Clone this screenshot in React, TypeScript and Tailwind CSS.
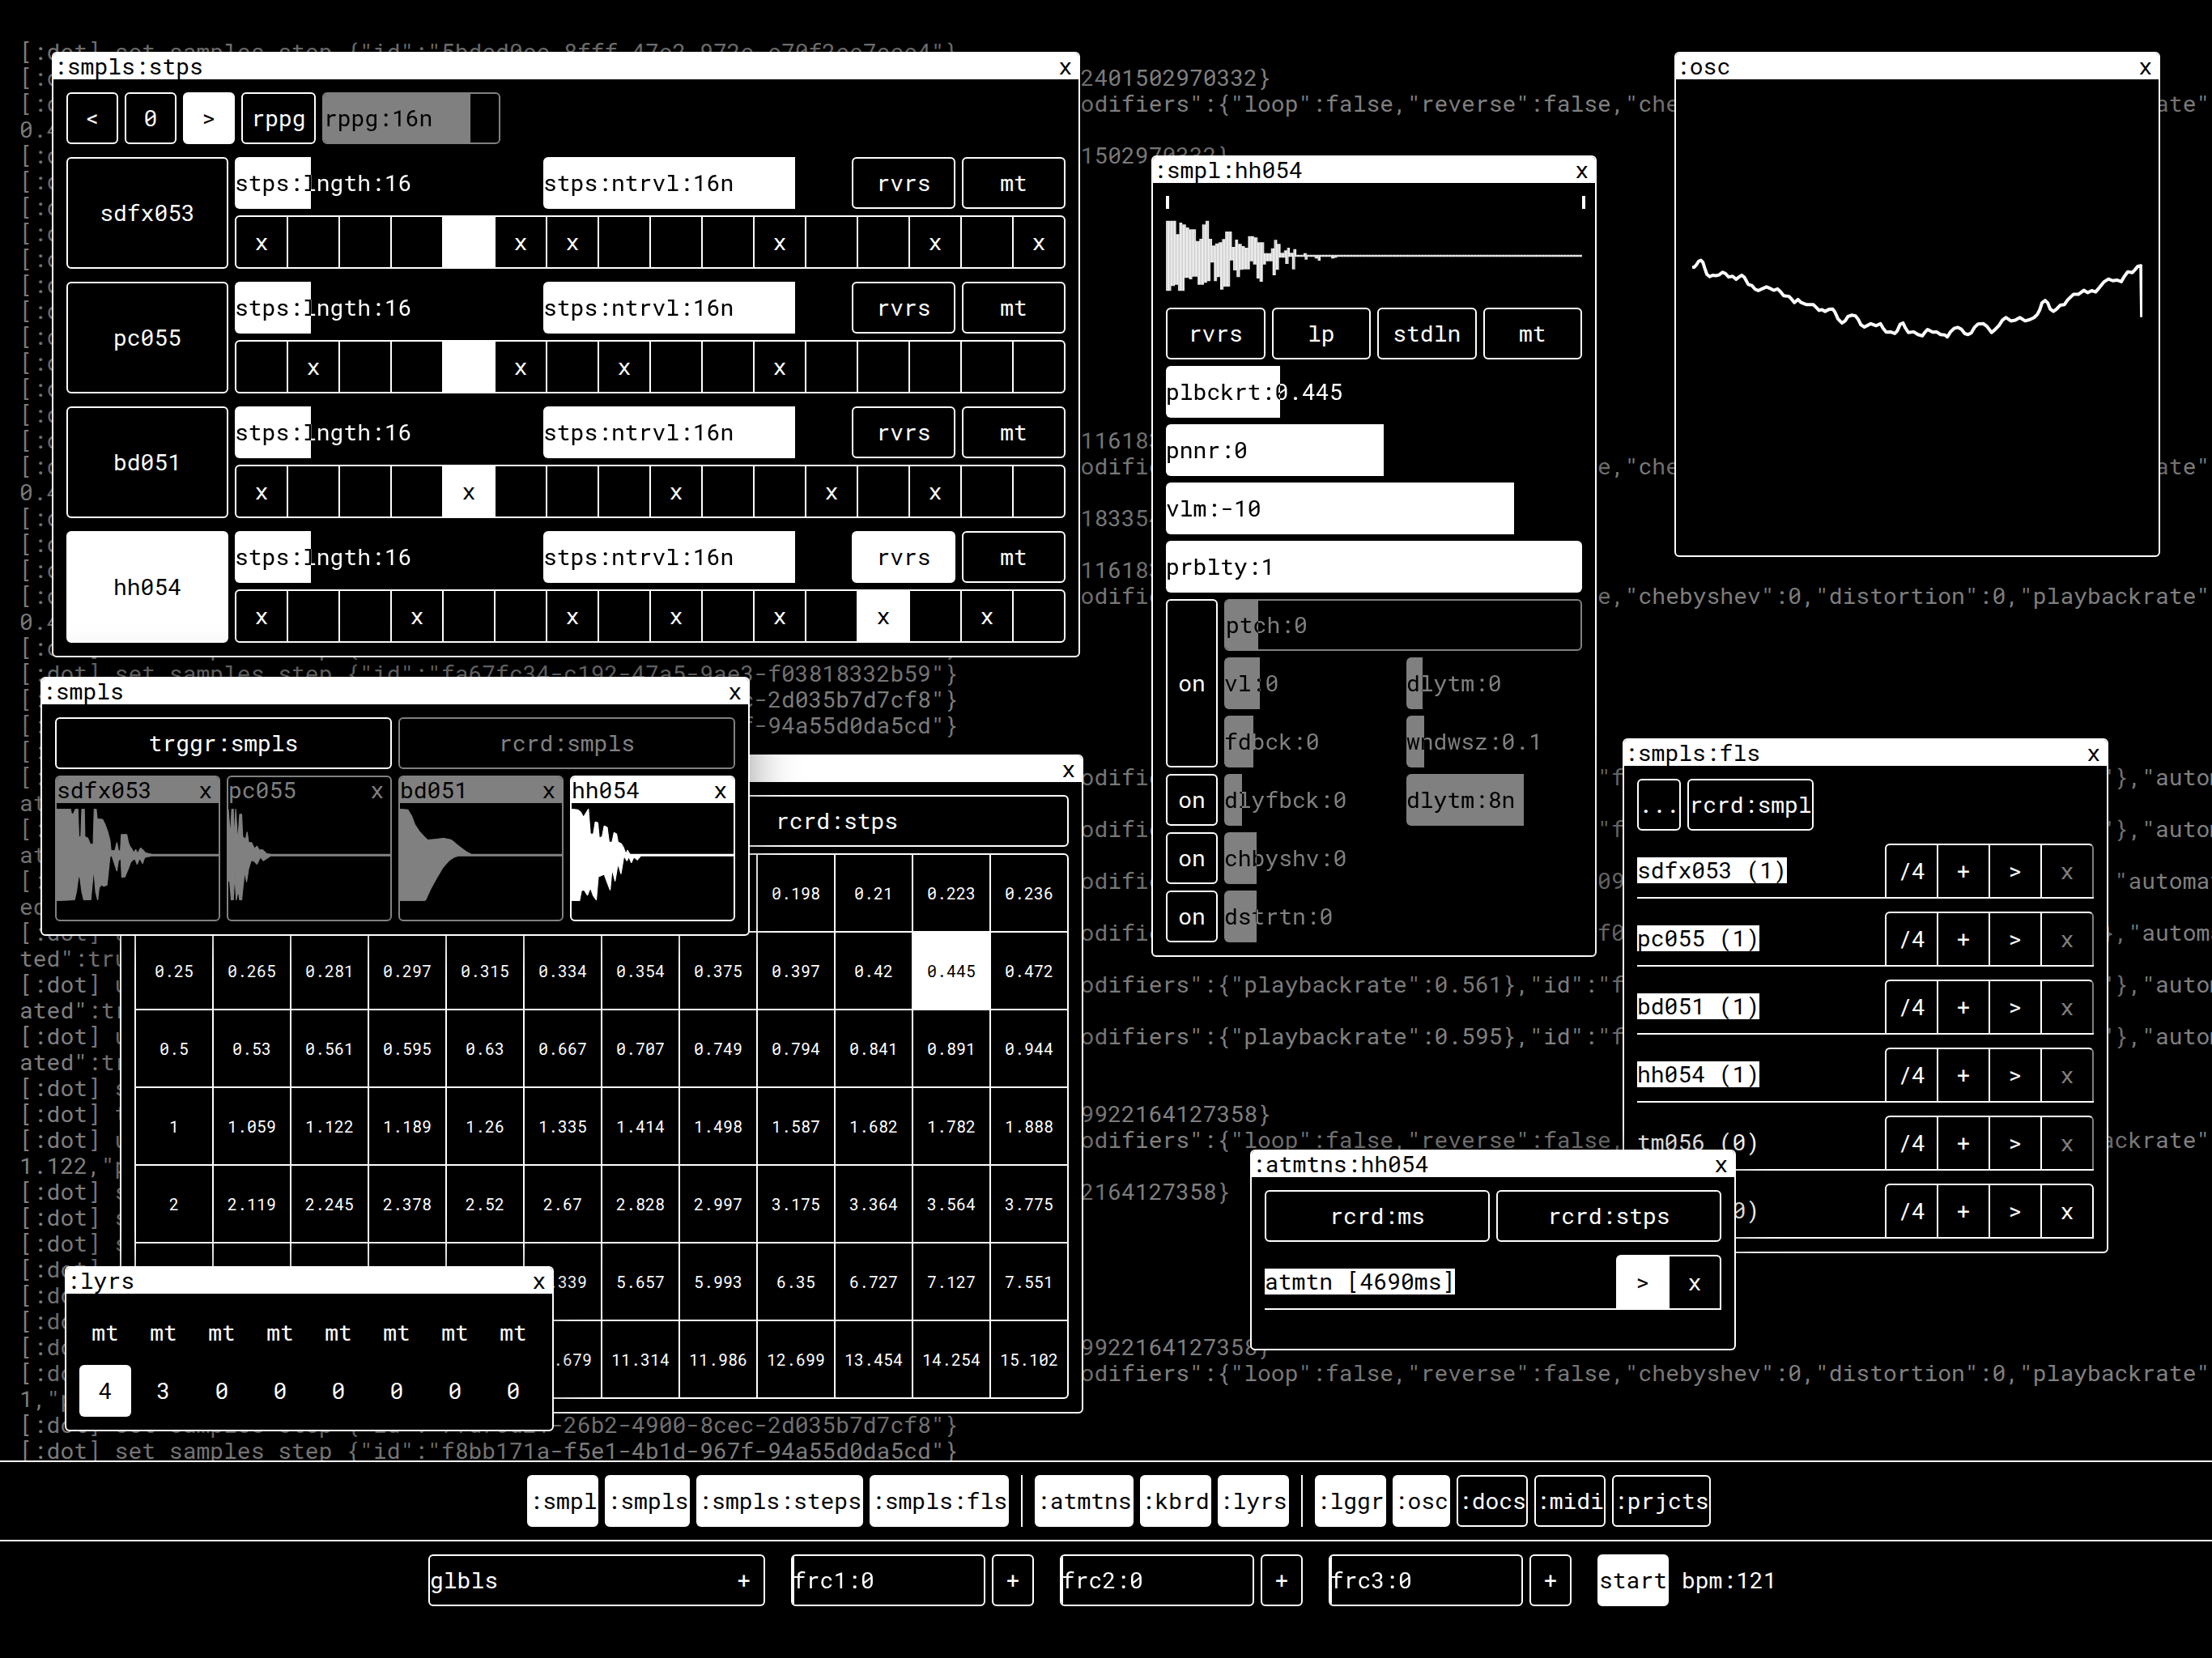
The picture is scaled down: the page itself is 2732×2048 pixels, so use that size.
import clsx from "clsx";
import type { ReactNode } from "react";

// ---------- log ----------

const FA = "fa67fc34-c192-47a5-9ae3-f03818332b59";
const CD = "7fd7cd21-26b2-4900-8cec-2d035b7d7cf8";
const F8 = "f8bb171a-f5e1-4b1d-967f-94a55d0da5cd";
const F0 = "f09a7c34-c192-47a5-9ae3-f03818332b59";

const set = (id: string) => `[:dot] set samples step {"id":"${id}"}`;
const trigger = (t: string) => `[:dot] trigger samples {"id":"${FA}","t":${t}}`;
const stop = (t: string) => `[:dot] stop samples {"id":"${FA}","t":${t}}`;
const state = (rate: string) =>
  `[:dot] update samples {"id":"${FA}","step":4,"modifiers":{"loop":false,"reverse":false,"chebyshev":0,"distortion":0,"playbackrate":${rate},"panner":0,"volume":-10}}`;
const rateChange = (rate: string) =>
  `[:dot] update samples {"id":"${FA}","step":4,"modifiers":{"playbackrate":${rate}},"id":"${F0}"},"automated":true}`;

const logLines = [
  set("5bded0ee-8fff-47e2-972e-e70f2ee7eee4"),
  trigger("0.47392401502970332"),
  state("0.445"),
  stop("0.47392401502970332"),
  set(FA),
  set(CD),
  set(F8),
  set(FA),
  set(CD),
  set(F8),
  set(FA),
  set(CD),
  set(F8),
  set(FA),
  trigger("0.473911618335418"),
  state("0.445"),
  stop("0.473911618335418"),
  set(CD),
  trigger("0.473911618335418"),
  state("0.445"),
  set(F8),
  set(FA),
  set(CD),
  set(F8),
  `[:dot] set automation {"on":true}`,
  rateChange("0.445"),
  rateChange("0.472"),
  rateChange("0.5"),
  rateChange("0.53"),
  rateChange("0.561"),
  rateChange("0.595"),
  set(CD),
  trigger("0.47399922164127358"),
  state("1.122"),
  stop("0.47399922164127358"),
  set(F8),
  set(FA),
  set(CD),
  set(F8),
  set(FA),
  trigger("0.47399922164127358"),
  state("1"),
  set(CD),
  set(F8),
];

// ---------- data ----------

const tracks = [
  { name: "sdfx053", steps: [0, 5, 6, 10, 13, 15], at: 4 },
  { name: "pc055", steps: [1, 5, 7, 10], at: 4 },
  { name: "bd051", steps: [0, 4, 8, 11, 13], at: 4 },
  { name: "hh054", steps: [0, 3, 6, 8, 10, 12, 14], at: 12, selected: true, reverse: true },
];

const samples = [
  {
    name: "sdfx053",
    head: "bg-[#808080] text-black",
    card: "border-[#808080] text-[#808080]",
    box: "112 576 328 384",
    d: "M112 598L140 598L142 615L146 615L150 598L155 598L157 700L161 700L163 598L168 598L169 700L175 705L180 728L186 728L188 598L192 598L194 633L205 636L210 655L215 680L220 715L222 750L230 752L234 722L237 750L241 755L243 692L254 692L257 720L260 735L264 745L268 760L272 748L276 762L282 742L286 748L292 760L305 765L440 765V772L305 772L290 778L286 800L280 780L275 803L270 780L262 795L258 815L250 850L244 852L242 780L237 790L234 828L229 800L224 772L220 775L214 880L208 885L202 880L198 890L195 935L191 905L187 820L181 935L167 935L163 905L159 850L156 850L152 905L148 935L112 938Z",
  },
  {
    name: "pc055",
    head: "text-[#808080]",
    card: "border-[#808080] text-[#808080]",
    box: "459 576 328 384",
    d: "M459 600L463 700L466 598L469 598L471 712L474 598L478 720L482 617L486 617L488 700L494 710L497 683L500 720L506 722L512 745L517 735L522 750L528 748L536 762L545 765L787 765V772L545 772L530 790L524 776L517 803L510 790L505 790L500 820L496 868L492 830L486 935L482 935L479 900L475 935L472 840L469 935L465 935L462 870L459 860Z",
  },
  {
    name: "bd051",
    head: "bg-[#808080] text-black",
    card: "border-[#808080] text-[#808080]",
    box: "806 576 328 384",
    d: "M806 598L822 600L830 625L836 655L845 680L855 700L862 712L875 710L895 706L910 712L925 735L940 755L950 765L1134 765V772L950 772L925 772L915 778L905 790L893 815L880 855L868 895L858 935L855 938L806 938Z",
  },
  {
    name: "hh054",
    head: "bg-white text-black",
    card: "border-white text-white",
    box: "1152 576 328 384",
    d: "M1152 598L1164 600L1170 608L1176 628L1182 610L1186 598L1190 690L1196 690L1200 645L1205 648L1208 705L1214 700L1218 660L1224 665L1228 720L1234 720L1238 685L1243 690L1246 720L1252 725L1257 740L1262 765L1265 750L1270 765L1480 765V772L1292 772L1285 787L1278 776L1273 797L1268 775L1264 790L1258 772L1252 838L1246 800L1240 865L1234 820L1230 898L1224 870L1218 840L1212 845L1206 850L1202 935L1196 920L1190 890L1184 918L1178 900L1172 900L1168 938L1152 938Z",
  },
];

const files = [
  { name: "sdfx053", count: 1, locked: true },
  { name: "pc055", count: 1, locked: true },
  { name: "bd051", count: 1, locked: true },
  { name: "hh054", count: 1, locked: true },
  { name: "tm056", count: 0, locked: true },
  { name: "cr057", count: 0, locked: false },
];

// 7 octaves of playback rates, 12 semitones each
const rates = Array.from({ length: 84 }, (_, i) => Number((0.125 * 2 ** (i / 12)).toFixed(3)));

const menu = [
  [
    [":smpl", true],
    [":smpls", true],
    [":smpls:steps", true],
    [":smpls:fls", true],
  ],
  [
    [":atmtns", true],
    [":kbrd", true],
    [":lyrs", true],
  ],
  [
    [":lggr", true],
    [":osc", true],
    [":docs", false],
    [":midi", false],
    [":prjcts", false],
  ],
] as [string, boolean][][];

// ---------- controls ----------

function Btn({ on, dim, className, children }: { on?: boolean; dim?: boolean; className?: string; children: ReactNode }) {
  return (
    <button
      type="button"
      className={clsx(
        "h-16 rounded-md border-2 text-center whitespace-nowrap",
        on ? "border-white bg-white text-black" : dim ? "border-[#808080] text-[#808080]" : "border-white text-white",
        className
      )}
    >
      {children}
    </button>
  );
}

function Slider({ label, value, dim, border, className }: { label: string; value: number; dim?: boolean; border?: boolean; className?: string }) {
  return (
    <label
      className={clsx(
        "isolate grid h-16 items-center overflow-hidden rounded-md bg-black",
        dim ? "text-[#808080]" : "text-white",
        border && (dim ? "border-2 border-[#808080]" : "border-2 border-white"),
        className
      )}
    >
      <input
        type="range"
        min={0}
        max={100}
        defaultValue={value}
        className="col-start-1 row-start-1 h-full w-full min-w-0 appearance-none [&::-webkit-slider-thumb]:opacity-0"
        style={{ background: `linear-gradient(to right, currentColor ${value}%, transparent ${value}%)` }}
      />
      <span className="pointer-events-none col-start-1 row-start-1 whitespace-nowrap mix-blend-difference">{label}</span>
    </label>
  );
}

function Win({ title, className, children }: { title: string; className: string; children: ReactNode }) {
  return (
    <section
      className={clsx(
        "absolute overflow-hidden rounded-md border-2 border-white bg-black shadow-[0_0_60px_rgba(0,0,0,0.4)]",
        className
      )}
    >
      <header className="flex h-8 items-center justify-between bg-white pr-2 text-black">
        <h2>{title}</h2>
        <button type="button">x</button>
      </header>
      {children}
    </section>
  );
}

function Row({ label, on, children }: { label: string; on?: boolean; children: ReactNode }) {
  return (
    <div className="flex items-center justify-between border-b-2 border-white">
      <span className={on ? "bg-white text-black" : ""}>{label}</span>
      <div className="flex">{children}</div>
    </div>
  );
}

const cell = "h-[66px] border-t-2 border-l-2 border-white";

// ---------- windows ----------

function Steps() {
  return (
    <Win title=":smpls:stps" className="top-16 left-16 w-[1270px]">
      <div className="flex flex-col gap-4 p-4">
        <div className="flex gap-2">
          <Btn className="w-16">&lt;</Btn>
          <Btn className="w-16">0</Btn>
          <Btn on className="w-16">
            &gt;
          </Btn>
          <Btn className="w-[92px]">rppg</Btn>
          <Slider label="rppg:16n" value={84} dim border className="w-[220px]" />
        </div>
        {tracks.map((t) => (
          <div key={t.name} className="flex gap-2">
            <Btn on={t.selected} className="h-auto w-[200px]">
              {t.name}
            </Btn>
            <div className="flex flex-1 flex-col gap-2">
              <div className="flex gap-2">
                <Slider label="stps:lngth:16" value={25.2} className="flex-1" />
                <Slider label="stps:ntrvl:16n" value={83.4} className="flex-1" />
                <Btn on={t.reverse} className="w-32">
                  rvrs
                </Btn>
                <Btn className="w-32">mt</Btn>
              </div>
              <div className="grid grid-cols-16 gap-0.5 overflow-hidden rounded-md border-2 border-white bg-white">
                {Array.from({ length: 16 }, (_, i) => (
                  <button
                    key={i}
                    type="button"
                    aria-label={`step ${i + 1}`}
                    className={clsx("h-[62px]", i === t.at ? "bg-white text-black" : "bg-black text-white")}
                  >
                    {t.steps.includes(i) ? "x" : ""}
                  </button>
                ))}
              </div>
            </div>
          </div>
        ))}
      </div>
    </Win>
  );
}

function Keyboard() {
  return (
    <Win title=":kbrd" className="top-[932px] left-[148px] w-[1190px]">
      <div className="flex flex-col gap-2 p-4">
        <div className="grid grid-cols-2 gap-2">
          <Btn>rcrd:ms</Btn>
          <Btn>rcrd:stps</Btn>
        </div>
        <div className="grid grid-cols-12 gap-0.5 overflow-hidden rounded-md border-2 border-white bg-white text-[20px]">
          {rates.map((r) => (
            <button key={r} type="button" className={clsx("h-[94px]", r === 0.445 ? "bg-white text-black" : "bg-black text-white")}>
              {r}
            </button>
          ))}
        </div>
      </div>
    </Win>
  );
}

function Samples() {
  return (
    <Win title=":smpls" className="top-[836px] left-[50px] w-[876px]">
      <div className="flex flex-col gap-2 p-4">
        <div className="grid grid-cols-2 gap-2">
          <Btn>trggr:smpls</Btn>
          <Btn dim>rcrd:smpls</Btn>
        </div>
        <div className="grid grid-cols-4 gap-2">
          {samples.map((s) => (
            <div key={s.name} className={clsx("overflow-hidden rounded-md border-2 pb-4", s.card)}>
              <div className={clsx("flex h-8 items-center justify-between pr-2", s.head)}>
                <span>{s.name}</span>
                <button type="button">x</button>
              </div>
              <svg viewBox={s.box} preserveAspectRatio="none" className="block h-32 w-full">
                <path d={s.d} fill="currentColor" stroke="currentColor" strokeWidth="2" strokeLinejoin="round" />
              </svg>
            </div>
          ))}
        </div>
      </div>
    </Win>
  );
}

function Sample() {
  return (
    <Win title=":smpl:hh054" className="top-48 left-[1422px] w-[550px]">
      <div className="flex flex-col gap-2 p-4">
        <div>
          {/* start / end markers */}
          <div className="-mr-1 flex justify-between">
            <div className="h-4 w-1 bg-white" />
            <div className="h-4 w-1 bg-white" />
          </div>
          <svg viewBox="105 234 1343 342" preserveAspectRatio="none" className="block h-[114px] w-full">
            <defs>
              <pattern id="bars" width="10" height="342" patternUnits="userSpaceOnUse">
                <rect width="10" height="342" fill="#cccccc" />
                <rect width="6" height="342" fill="#eeeeee" />
              </pattern>
            </defs>
            <path
              fill="url(#bars)"
              d="M105 278H138V328H148V285H158V292H170V303H180V310H202V353H213V345H222V292H233V278H244V345H254V370H264V362H275V358H286V346H296V318H318V375H328V348H338V364H350V372H360V378H370V335H390V340H401V358H422V398H444V380H454V349H464V364H475V397H486V388H496V378H505V397H516V383H526V404H549V398H560V404H1448V412H658V415H650V418H638V412H604V426H595V418H585V412H562V422H553V412H522V458H512V412H501V438H490V415H470V460H460V480H449V428H428V440H418V504H407V492H397V440H386V428H376V458H354V460H344V487H333V462H322V425H312V522H291V533H280V487H270V502H260V433H249V502H238V508H228V515H207V485H190V495H180V490H165V538H144V515H134V520H122V538H105Z"
            />
          </svg>
        </div>
        <div className="grid grid-cols-4 gap-2">
          <Btn>rvrs</Btn>
          <Btn>lp</Btn>
          <Btn>stdln</Btn>
          <Btn>mt</Btn>
        </div>
        <Slider label="plbckrt:0.445" value={27.4} />
        <Slider label="pnnr:0" value={52.4} />
        <Slider label="vlm:-10" value={83.6} />
        <Slider label="prblty:1" value={100} />
        <div className="flex gap-2">
          <Btn className="h-auto w-16">on</Btn>
          <div className="grid flex-1 grid-cols-2 gap-2">
            <Slider label="ptch:0" value={9.2} dim border className="col-span-2" />
            <Slider label="vl:0" value={20.3} dim />
            <Slider label="dlytm:0" value={9.2} dim />
            <Slider label="fdbck:0" value={16.6} dim />
            <Slider label="wndwsz:0.1" value={10.1} dim />
          </div>
        </div>
        <div className="flex gap-2">
          <Btn className="w-16">on</Btn>
          <div className="grid flex-1 grid-cols-2 gap-2">
            <Slider label="dlyfbck:0" value={10.1} dim />
            <Slider label="dlytm:8n" value={67} dim />
          </div>
        </div>
        <div className="flex gap-2">
          <Btn className="w-16">on</Btn>
          <Slider label="chbyshv:0" value={9.1} dim className="flex-1" />
        </div>
        <div className="flex gap-2">
          <Btn className="w-16">on</Btn>
          <Slider label="dstrtn:0" value={9.1} dim className="flex-1" />
        </div>
      </div>
    </Win>
  );
}

function Osc() {
  return (
    <Win title=":osc" className="top-16 left-[2068px] w-[600px]">
      <div className="px-5">
        <svg viewBox="113 114 1260 1397" preserveAspectRatio="none" className="block h-[588px] w-full">
          <path
            fill="none"
            stroke="white"
            strokeWidth="4"
            strokeLinejoin="round"
            vectorEffect="non-scaling-stroke"
            d="M113 666L119 665L125 658L131 648L137 645L143 651L148 668L154 686L162 693L170 689L180 690L188 688L198 680L206 684L215 694L226 692L236 701L244 694L252 689L259 695L270 716L280 719L289 730L298 734L308 729L321 723L332 728L341 733L352 729L360 737L369 749L384 751L392 760L399 769L409 760L418 769L432 775L452 775L460 783L468 792L476 790L485 795L496 789L506 788L512 796L521 817L532 829L541 823L549 810L560 806L570 808L578 819L585 834L595 841L604 836L613 831L628 837L640 831L647 844L656 856L668 855L680 860L687 852L695 833L703 829L710 844L718 857L733 855L745 863L757 867L764 857L772 848L786 856L797 855L808 863L820 864L827 870L836 855L846 845L856 842L866 847L876 860L885 863L894 858L903 842L913 832L928 831L938 839L951 857L960 849L972 836L981 821L991 813L1005 823L1017 821L1030 813L1045 823L1058 819L1070 813L1079 804L1086 790L1092 770L1101 763L1108 770L1115 788L1124 795L1132 789L1143 777L1155 775L1164 761L1180 745L1194 745L1209 733L1220 740L1231 734L1242 738L1252 726L1265 709L1278 700L1290 705L1302 703L1314 708L1322 693L1332 679L1345 681L1353 672L1360 663L1369 661L1371 812"
          />
        </svg>
      </div>
    </Win>
  );
}

function Files() {
  return (
    <Win title=":smpls:fls" className="top-[912px] left-[2004px] w-[600px]">
      <div className="flex flex-col gap-4 p-4">
        <div className="flex gap-2">
          <Btn>...</Btn>
          <Btn>rcrd:smpl</Btn>
        </div>
        {files.map((f) => (
          <Row key={f.name} label={`${f.name} (${f.count})`} on={f.count > 0}>
            <button type="button" className={clsx(cell, "w-16 rounded-tl-md")}>
              /4
            </button>
            <button type="button" className={clsx(cell, "w-16")}>
              +
            </button>
            <button type="button" className={clsx(cell, "w-16")}>
              &gt;
            </button>
            <button
              type="button"
              className={clsx(cell, "w-[66px] rounded-tr-md border-r-2", f.locked && "border-r-[#808080] text-[#808080]")}
            >
              x
            </button>
          </Row>
        ))}
      </div>
    </Win>
  );
}

function Automations() {
  return (
    <Win title=":atmtns:hh054" className="top-[1420px] left-[1544px] w-[600px]">
      <div className="flex flex-col gap-4 p-4 pb-12">
        <div className="grid grid-cols-2 gap-2">
          <Btn>rcrd:ms</Btn>
          <Btn>rcrd:stps</Btn>
        </div>
        <Row label="atmtn [4690ms]" on>
          <button type="button" className={clsx(cell, "w-16 rounded-tl-md bg-white text-black")}>
            &gt;
          </button>
          <button type="button" className={clsx(cell, "w-[66px] rounded-tr-md border-r-2")}>
            x
          </button>
        </Row>
      </div>
    </Win>
  );
}

function Layers() {
  const counts = [4, 3, 0, 0, 0, 0, 0, 0];
  return (
    <Win title=":lyrs" className="top-[1564px] left-20 w-[604px]">
      <div className="grid grid-cols-8 gap-2 p-4">
        {counts.map((_, i) => (
          <button key={i} type="button" className="h-16">
            mt
          </button>
        ))}
        {counts.map((c, i) => (
          <button key={i} type="button" className={clsx("h-16 rounded-md", i === 0 && "bg-white text-black")}>
            {c}
          </button>
        ))}
      </div>
    </Win>
  );
}

export default function App() {
  return (
    <div className="flex h-screen flex-col overflow-hidden bg-black font-['Roboto_Mono','Liberation_Mono',monospace] text-[28px] leading-8 text-white">
      <main className="relative min-h-0 flex-1 overflow-hidden">
        <div className="-mr-6 ml-6 pt-12 break-all text-[#808080]">
          {logLines.map((line, i) => (
            <p key={i}>{line}</p>
          ))}
        </div>
        <Steps />
        <Keyboard />
        <Samples />
        <Sample />
        <Osc />
        <Files />
        <Automations />
        <Layers />
      </main>

      <nav className="flex justify-center gap-2 border-t-2 border-white py-4 pl-8">
        {menu.map((group, g) => (
          <div key={g} className="flex gap-2">
            {g > 0 && <div className="mx-[7px] w-0.5 bg-white" />}
            {group.map(([name, on]) => (
              <Btn key={name} on={on}>
                {name}
              </Btn>
            ))}
          </div>
        ))}
      </nav>

      <footer className="flex justify-center gap-8 border-t-2 border-white pt-4 pb-16">
        <Btn className="flex w-[416px] items-center justify-between pr-4">
          <span>glbls</span>
          <span>+</span>
        </Btn>
        {["frc1:0", "frc2:0", "frc3:0"].map((f) => (
          <div key={f} className="flex gap-2">
            <Slider label={f} value={1} border className="w-60" />
            <Btn className="w-[52px]">+</Btn>
          </div>
        ))}
        <div className="flex gap-4">
          <Btn on>start</Btn>
          <button type="button" className="w-[126px] text-left">
            bpm:121
          </button>
        </div>
      </footer>
    </div>
  );
}
